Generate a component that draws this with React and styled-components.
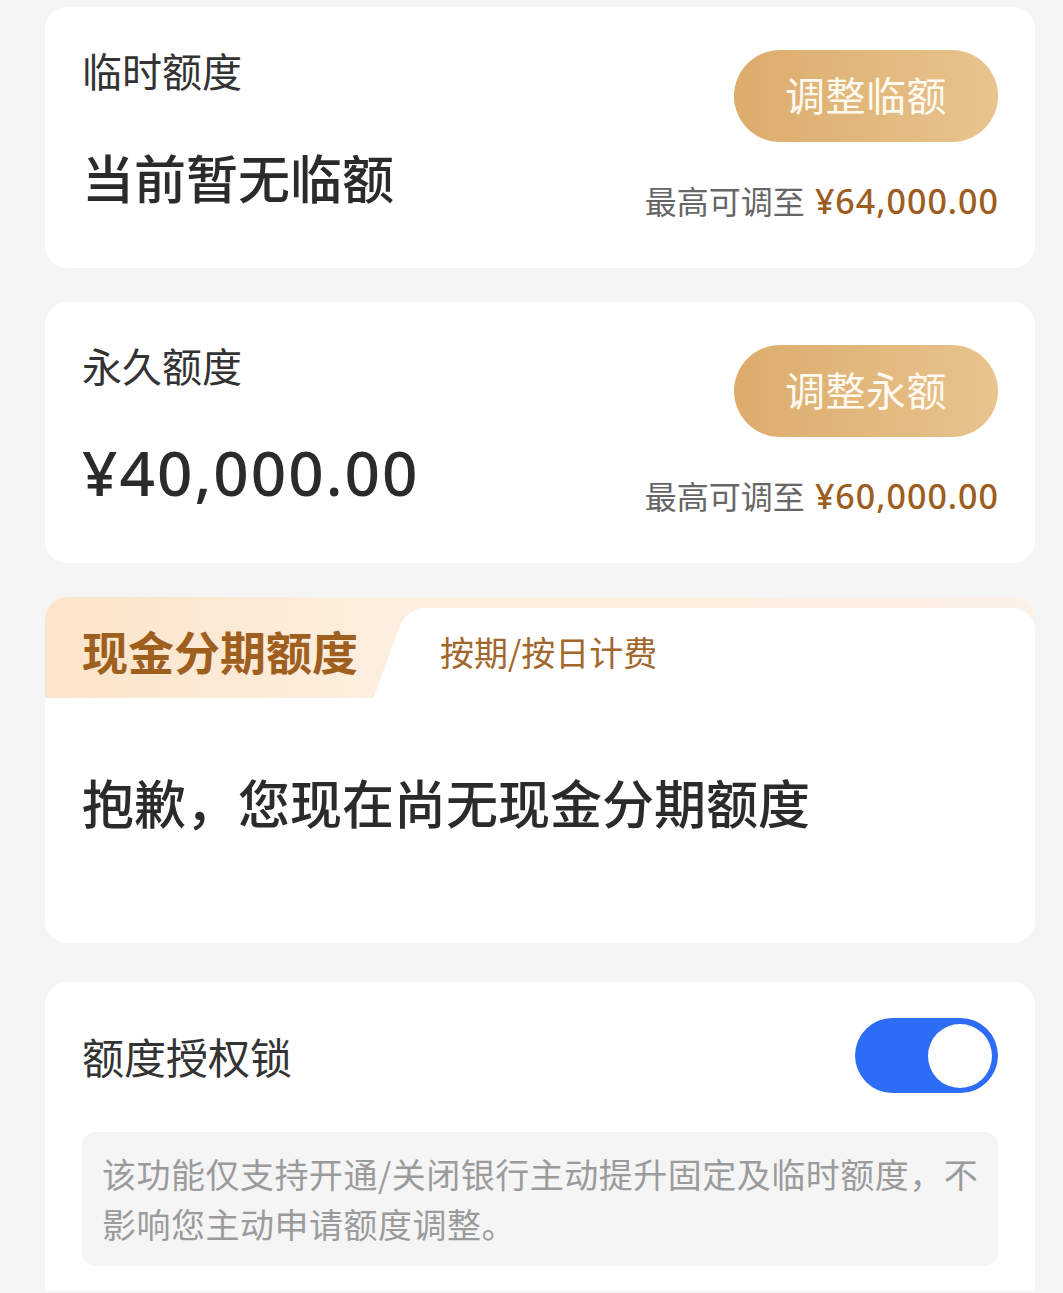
import styled, { createGlobalStyle } from "styled-components";

const GlobalStyle = createGlobalStyle`
  * { box-sizing: border-box; }
  body {
    margin: 0;
    background: #f5f5f5;
    font-family: "Noto Sans CJK SC", "Noto Sans", sans-serif;
    color: #333;
  }
`;

const Page = styled.div`
  display: flex;
  flex-direction: column;
  padding: 7px 28px 0 45px;
  min-height: 1293px;
  overflow: hidden;
`;

const Card = styled.section`
  background: #fff;
  border-radius: 22px;
  overflow: hidden;
  margin-top: ${(p) => p.$gap || 0}px;
`;

const LimitCard = styled(Card)`
  display: flex;
  justify-content: space-between;
  height: 261px;
  padding: 0 37px;
`;

const LeftCol = styled.div`
  display: flex;
  flex-direction: column;
  padding-top: 39px;
`;

const RightCol = styled.div`
  display: flex;
  flex-direction: column;
  align-items: flex-end;
  padding-top: 43px;
`;

const Label = styled.div`
  font-size: ${(p) => p.$size || 40}px;
  line-height: 48px;
  color: #333;
`;

const Value = styled.div`
  margin-top: 53px;
  line-height: 60px;
  color: #2b2b2b;
  font-weight: 500;
  font-size: ${(p) => (p.$amount ? 62 : 52)}px;
  letter-spacing: ${(p) => (p.$amount ? 2 : 0)}px;
  font-family: ${(p) =>
    p.$amount ? `"Noto Sans", "Noto Sans CJK SC", sans-serif` : `"Noto Sans CJK SC", sans-serif`};
`;

const AdjustButton = styled.button`
  width: 264px;
  height: 92px;
  border: none;
  border-radius: 46px;
  background: linear-gradient(90deg, #dcac6c 0%, #e3ba80 60%, #e8c48f 100%);
  color: #fffaf0;
  font-family: "Noto Sans CJK SC", sans-serif;
  font-size: 40px;
  line-height: 1;
  letter-spacing: 0.5px;
  padding: 0 0 4px;
  cursor: pointer;
`;

const MaxRow = styled.div`
  display: flex;
  align-items: baseline;
  margin-top: 38px;
  line-height: 40px;
`;

const MaxLabel = styled.span`
  font-size: 32px;
  color: #666;
`;

const MaxAmount = styled.span`
  margin-left: 10px;
  font-family: "Noto Sans", sans-serif;
  font-size: 34px;
  letter-spacing: 1px;
  margin-right: -1px;
  font-weight: 500;
  color: #9c5d1f;
`;

const CashCard = styled(Card)`
  height: 346px;
  display: flex;
  flex-direction: column;
`;

const CashHeader = styled.div`
  display: flex;
  height: 101px;
  background: linear-gradient(90deg, #fbe4c9 0%, #fdefdf 35%, #fcefe0 70%, #fbf1e5 100%);
`;

const TabTitle = styled.div`
  width: 375px;
  flex-shrink: 0;
  display: flex;
  align-items: center;
  padding: 4px 0 0 37px;
  font-size: 46px;
  font-weight: 700;
  color: #9f5f1f;
`;

const FeePanel = styled.div`
  flex: 1;
  position: relative;
  margin-top: 11px;
  display: flex;
  align-items: center;
  padding: 0 0 4px 20px;
  background: #fff;
  border-radius: 0 22px 0 0;

  &::before {
    content: "";
    position: absolute;
    left: -30px;
    top: 0;
    bottom: 0;
    width: 60px;
    background: #fff;
    border-radius: 18px 0 0 0;
    transform: skewX(-20deg);
  }
`;

const FeeText = styled.span`
  position: relative;
  font-size: 34px;
  color: #a2672b;
`;

const CashBody = styled.div`
  flex: 1;
  padding: 74px 37px 0;
  font-size: 52px;
  line-height: 60px;
  font-weight: 500;
  color: #2b2b2b;
`;

const LockCard = styled(Card)`
  padding: 36px 37px 25px;
  border-radius: 22px 22px 0 0;
`;

const LockRow = styled.div`
  display: flex;
  justify-content: space-between;
  align-items: center;
  height: 75px;
`;

const Switch = styled.div`
  width: 143px;
  height: 75px;
  border-radius: 38px;
  background: ${(p) => (p.$on ? "#2d6cf5" : "#ccc")};
  display: flex;
  align-items: center;
  justify-content: ${(p) => (p.$on ? "flex-end" : "flex-start")};
  padding: 0 6px;
`;

const Knob = styled.div`
  width: 64px;
  height: 64px;
  border-radius: 50%;
  background: #fff;
`;

const InfoBox = styled.div`
  margin-top: 39px;
  background: #f5f5f5;
  border-radius: 14px;
  padding: 17px 12px 17px 20px;
  font-size: 34px;
  letter-spacing: 0.5px;
  line-height: 50px;
  color: #9b9b9b;
`;

const limits = [
  {
    label: "临时额度",
    value: "当前暂无临额",
    amount: false,
    button: "调整临额",
    max: "¥64,000.00",
  },
  {
    label: "永久额度",
    value: "¥40,000.00",
    amount: true,
    button: "调整永额",
    max: "¥60,000.00",
  },
];

export default function App() {
  return (
    <>
      <GlobalStyle />
      <Page>
        {limits.map((item, i) => (
          <LimitCard key={item.label} $gap={i === 0 ? 0 : 34}>
            <LeftCol>
              <Label>{item.label}</Label>
              <Value $amount={item.amount}>{item.value}</Value>
            </LeftCol>
            <RightCol>
              <AdjustButton>{item.button}</AdjustButton>
              <MaxRow>
                <MaxLabel>最高可调至</MaxLabel>
                <MaxAmount>{item.max}</MaxAmount>
              </MaxRow>
            </RightCol>
          </LimitCard>
        ))}

        <CashCard $gap={34}>
          <CashHeader>
            <TabTitle>现金分期额度</TabTitle>
            <FeePanel>
              <FeeText>按期/按日计费</FeeText>
            </FeePanel>
          </CashHeader>
          <CashBody>抱歉，您现在尚无现金分期额度</CashBody>
        </CashCard>

        <LockCard $gap={39}>
          <LockRow>
            <Label $size={42}>额度授权锁</Label>
            <Switch $on>
              <Knob />
            </Switch>
          </LockRow>
          <InfoBox>
            该功能仅支持开通/关闭银行主动提升固定及临时额度，不影响您主动申请额度调整。
          </InfoBox>
        </LockCard>
      </Page>
    </>
  );
}
